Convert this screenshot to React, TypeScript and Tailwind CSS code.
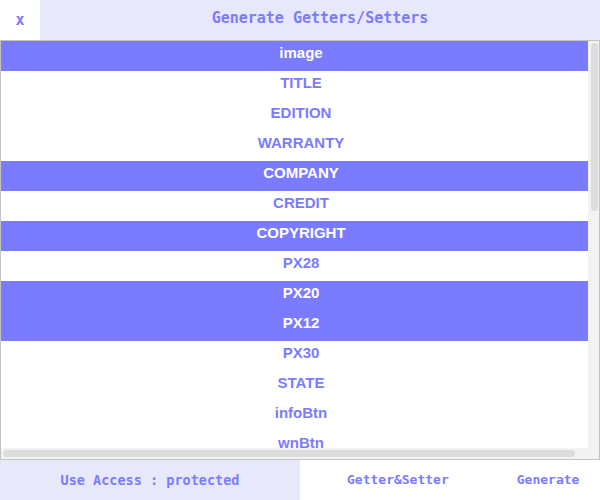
import React from 'react';

const fields = [
  { name: "image", selected: true },
  { name: "TITLE", selected: false },
  { name: "EDITION", selected: false },
  { name: "WARRANTY", selected: false },
  { name: "COMPANY", selected: true },
  { name: "CREDIT", selected: false },
  { name: "COPYRIGHT", selected: true },
  { name: "PX28", selected: false },
  { name: "PX20", selected: true },
  { name: "PX12", selected: true },
  { name: "PX30", selected: false },
  { name: "STATE", selected: false },
  { name: "infoBtn", selected: false },
  { name: "wnBtn", selected: false },
  { name: "helpBtn", selected: false },
  { name: "closeBtn", selected: false },
];

const mono = "font-['DejaVu_Sans_Mono','Liberation_Mono',monospace]";

const App: React.FC = () => {
  return (
    <div className="w-[600px] h-[500px] flex flex-col bg-white text-[#7b7bff] overflow-hidden">
      {/* header */}
      <div className={`h-[40px] flex shrink-0 ${mono}`}>
        <button className="w-[40px] h-full bg-white flex items-center justify-center text-[15px] font-bold">
          x
        </button>
        <div className="flex-1 bg-[#e8e8fb] flex items-center justify-center text-[15px] font-bold pb-[4px]">
          Generate Getters/Setters
        </div>
      </div>

      {/* field list with drawn scrollbars */}
      <div className="flex-1 min-h-0 border border-[#c2c2c2] flex flex-col">
        <div className="flex-1 min-h-0 flex">
          <div className="flex-1 min-w-0 overflow-hidden font-['Liberation_Sans',Arial,sans-serif]">
            <div className="w-[600px]">
              {fields.map((field, index) => (
                <div
                  key={index}
                  className={`h-[30px] pt-[3px] text-center text-[15px] font-bold leading-[17px] ${
                    field.selected ? "bg-[#7b7bff] text-white" : "bg-white text-[#7b7bff]"
                  }`}
                >
                  {field.name}
                </div>
              ))}
            </div>
          </div>
          <div className="w-[11px] shrink-0 bg-[#f2f2f2] pt-[2px] pl-[3px]">
            <div className="w-[7px] h-[168px] rounded-full bg-[#dcdcdc]" />
          </div>
        </div>
        <div className="h-[11px] shrink-0 flex bg-[#f2f2f2]">
          <div className="flex-1 pt-[2px] pl-[2px]">
            <div className="w-[572px] h-[7px] rounded-full bg-[#dcdcdc]" />
          </div>
          <div className="w-[11px]" />
        </div>
      </div>

      {/* footer */}
      <div className={`h-[40px] flex shrink-0 font-bold ${mono}`}>
        <div className="w-[300px] bg-[#e8e8fb] flex items-center justify-center text-[13.5px]">
          Use Access : protected
        </div>
        <div className="flex-1 bg-white flex items-center pl-[47px] gap-[68px] text-[13px]">
          <button>Getter&amp;Setter</button>
          <button>Generate</button>
        </div>
      </div>
    </div>
  );
};

export default App;
